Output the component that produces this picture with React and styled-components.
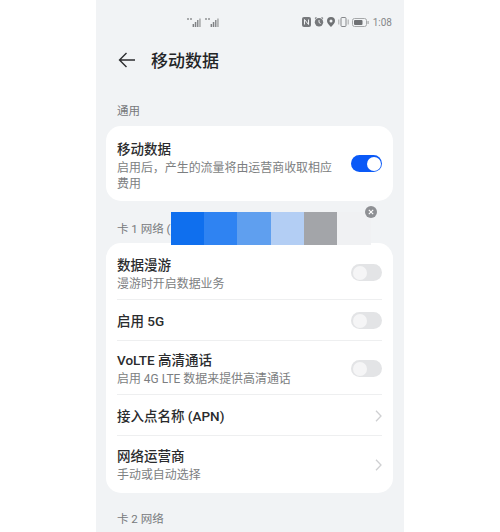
import React from 'react'
import styled, { createGlobalStyle } from 'styled-components'

const Global = createGlobalStyle`
  html, body {
    margin: 0;
    padding: 0;
    background: #ffffff;
  }
  body {
    font-family: Roboto, "Noto Sans CJK SC", sans-serif;
  }
`

const Page = styled.div`
  width: 500px;
  height: 532px;
  display: flex;
  justify-content: center;
  overflow: hidden;
`

const Phone = styled.div`
  position: relative;
  width: 308px;
  height: 532px;
  background: #f1f3f5;
  padding: 0 11px 0 10px;
  box-sizing: border-box;
  flex-shrink: 0;
  overflow: hidden;
`

const StatusBar = styled.div`
  height: 14px;
  margin-top: 15px;
  display: flex;
  align-items: center;
  justify-content: space-between;
  padding: 0 1px 0 81px;
`

const Signals = styled.div`
  display: flex;
  gap: 4px;
`

const StatusRight = styled.div`
  display: flex;
  align-items: center;
  gap: 3px;
  color: #8b8d90;
  font-size: 10px;
`

const Clock = styled.span`
  margin-left: 1px;
  color: #85878a;
`

const TitleBar = styled.div`
  height: 30px;
  margin-top: 16px;
  display: flex;
  align-items: center;
  gap: 15px;
  padding-left: 12px;
`

const BackButton = styled.svg`
  width: 18px;
  height: 16px;
  color: #2c2d2f;
`

const Title = styled.h1`
  margin: 0;
  padding-top: 2px;
  font-size: 17px;
  line-height: 30px;
  font-weight: 500;
  color: #232426;
`

const SectionLabel = styled.div`
  height: 16px;
  margin: ${(p) => p.$top}px 0 ${(p) => p.$bottom}px;
  padding-left: 11px;
  font-size: 11.5px;
  line-height: 16px;
  color: #77797c;
`

const Card = styled.div`
  background: #ffffff;
  border-radius: 15px;
  padding: 0 11px;
`

const Row = styled.div`
  min-height: ${(p) => p.$height}px;
  box-sizing: border-box;
  padding-top: ${(p) => p.$pad || 0}px;
  display: flex;
  align-items: center;
  justify-content: space-between;
  gap: 12px;
  border-bottom: ${(p) => (p.$last ? 'none' : '1px solid #eeeff0')};
`

const RowText = styled.div`
  display: flex;
  flex-direction: column;
  gap: 2px;
  min-width: 0;
  margin-top: ${(p) => p.$shift || 0}px;
`

const RowTitle = styled.div`
  font-size: 13.5px;
  line-height: 18px;
  font-weight: 500;
  color: #2a2b2d;
`

const RowSub = styled.div`
  width: ${(p) => (p.$wrap ? '218px' : 'auto')};
  font-size: 11.95px;
  line-height: 16px;
  color: #7c7e81;
`

const Toggle = styled.div`
  width: 31px;
  height: 17px;
  flex-shrink: 0;
  box-sizing: border-box;
  padding: 1.5px;
  border-radius: 9px;
  display: flex;
  justify-content: ${(p) => (p.$on ? 'flex-end' : 'flex-start')};
  background: ${(p) => (p.$on ? '#0a59f7' : '#e3e4e6')};
`

const Knob = styled.div`
  width: 14px;
  height: 14px;
  border-radius: 50%;
  background: ${(p) => (p.$on ? '#ffffff' : '#f5f5f6')};
`

const Chevron = styled.svg`
  width: 7px;
  height: 12px;
  flex-shrink: 0;
  color: #cfd0d2;
`

const AdStrip = styled.div`
  position: absolute;
  left: 75px;
  top: 212px;
  display: flex;
  height: 33px;
`

const Swatch = styled.div`
  width: ${(p) => p.$w || 33.2}px;
  background: ${(p) => p.$color};
`

const CloseBadge = styled.div`
  position: absolute;
  left: 269px;
  top: 206px;
  width: 12px;
  height: 12px;
  border-radius: 50%;
  background: #8e9094;
  display: flex;
  align-items: center;
  justify-content: center;
`

const SignalIcon = () => (
  <svg width="14" height="9" viewBox="0 0 14 9">
    <rect x="0" y="0" width="2" height="2" fill="#a8aaac" />
    <rect x="3" y="0" width="2" height="2" fill="#a8aaac" />
    <rect x="5.6" y="6" width="1.5" height="3" fill="#7f8184" />
    <rect x="7.8" y="4" width="1.5" height="5" fill="#7f8184" />
    <rect x="10" y="2" width="1.5" height="7" fill="#8b8d90" />
    <rect x="12.2" y="0.5" width="1.5" height="8.5" fill="#a5a7a9" />
  </svg>
)

const StatusIcons = () => (
  <>
    <svg width="9" height="10" viewBox="0 0 9 10">
      <rect width="9" height="10" rx="2" fill="#77797c" />
      <path d="M2.5 7.5V2.5L6.5 7.5V2.5" stroke="#f1f3f5" strokeWidth="1" fill="none" />
    </svg>
    <svg width="10" height="10" viewBox="0 0 10 10">
      <circle cx="5" cy="5.3" r="4.2" fill="#77797c" />
      <path d="M1 1.5L2.5 .5M9 1.5L7.5 .5" stroke="#77797c" strokeWidth="1.2" />
      <path d="M5 3v2.5l1.6 1" stroke="#f1f3f5" strokeWidth="1" fill="none" />
    </svg>
    <svg width="8" height="10" viewBox="0 0 8 10">
      <path d="M4 0a4 4 0 0 1 4 4c0 2.4-2.6 4.6-4 6-1.4-1.4-4-3.6-4-6a4 4 0 0 1 4-4z" fill="#6f7174" />
      <circle cx="4" cy="4" r="1.5" fill="#f1f3f5" />
    </svg>
    <svg width="11" height="10" viewBox="0 0 11 10">
      <rect x="3" y=".5" width="5" height="9" rx="1" fill="none" stroke="#85878a" />
      <path d="M.8 2.5v5M10.2 2.5v5" stroke="#a5a7a9" />
    </svg>
    <svg width="17" height="9" viewBox="0 0 17 9">
      <rect x=".5" y=".5" width="14" height="8" rx="2" fill="none" stroke="#a5a7a9" />
      <rect x="2" y="2" width="8.5" height="5" rx="1" fill="#6f7174" />
      <rect x="15.5" y="3" width="1.2" height="3" fill="#a5a7a9" />
    </svg>
  </>
)

const Arrow = () => (
  <Chevron viewBox="0 0 7 12">
    <path d="M1 .8l5 5.2-5 5.2" fill="none" stroke="currentColor" strokeWidth="1.3" />
  </Chevron>
)

const Switch = ({ on }) => (
  <Toggle $on={on}>
    <Knob $on={on} />
  </Toggle>
)

const App = () => {
  return (
    <Page>
      <Global />
      <Phone>
        <StatusBar>
          <Signals>
            <SignalIcon />
            <SignalIcon />
          </Signals>
          <StatusRight>
            <StatusIcons />
            <Clock>1:08</Clock>
          </StatusRight>
        </StatusBar>

        <TitleBar>
          <BackButton viewBox="0 0 18 16">
            <path d="M17 8H1.5M8.5 1L1.5 8l7 7" fill="none" stroke="currentColor" strokeWidth="1.4" />
          </BackButton>
          <Title>移动数据</Title>
        </TitleBar>

        <SectionLabel $top={28} $bottom={7}>通用</SectionLabel>
        <Card>
          <Row $height={75} $last>
            <RowText $shift={4}>
              <RowTitle>移动数据</RowTitle>
              <RowSub $wrap>启用后，产生的流量将由运营商收取相应费用</RowSub>
            </RowText>
            <Switch on />
          </Row>
        </Card>

        <SectionLabel $top={20} $bottom={6}>卡 1 网络 (</SectionLabel>
        <Card>
          <Row $height={57} $pad={3}>
            <RowText $shift={3}>
              <RowTitle>数据漫游</RowTitle>
              <RowSub>漫游时开启数据业务</RowSub>
            </RowText>
            <Switch />
          </Row>
          <Row $height={41} $pad={1}>
            <RowTitle>启用 5G</RowTitle>
            <Switch />
          </Row>
          <Row $height={54} $pad={2}>
            <RowText>
              <RowTitle>VoLTE 高清通话</RowTitle>
              <RowSub>启用 4G LTE 数据来提供高清通话</RowSub>
            </RowText>
            <Switch />
          </Row>
          <Row $height={41} $pad={2}>
            <RowTitle>接入点名称 (APN)</RowTitle>
            <Arrow />
          </Row>
          <Row $height={57} $last>
            <RowText>
              <RowTitle>网络运营商</RowTitle>
              <RowSub>手动或自动选择</RowSub>
            </RowText>
            <Arrow />
          </Row>
        </Card>

        <SectionLabel $top={18} $bottom={0}>卡 2 网络</SectionLabel>

        <AdStrip>
          <Swatch $color="#0f6fee" />
          <Swatch $color="#2f83f2" />
          <Swatch $color="#5f9fef" />
          <Swatch $color="#b3cef4" />
          <Swatch $color="#a3a5a9" />
          <Swatch $color="#f0f1f3" $w={34} />
        </AdStrip>
        <CloseBadge>
          <svg width="6" height="6" viewBox="0 0 6 6">
            <path d="M.8.8l4.4 4.4M5.2.8L.8 5.2" stroke="#ffffff" strokeWidth="1.1" />
          </svg>
        </CloseBadge>
      </Phone>
    </Page>
  )
}

export default App
